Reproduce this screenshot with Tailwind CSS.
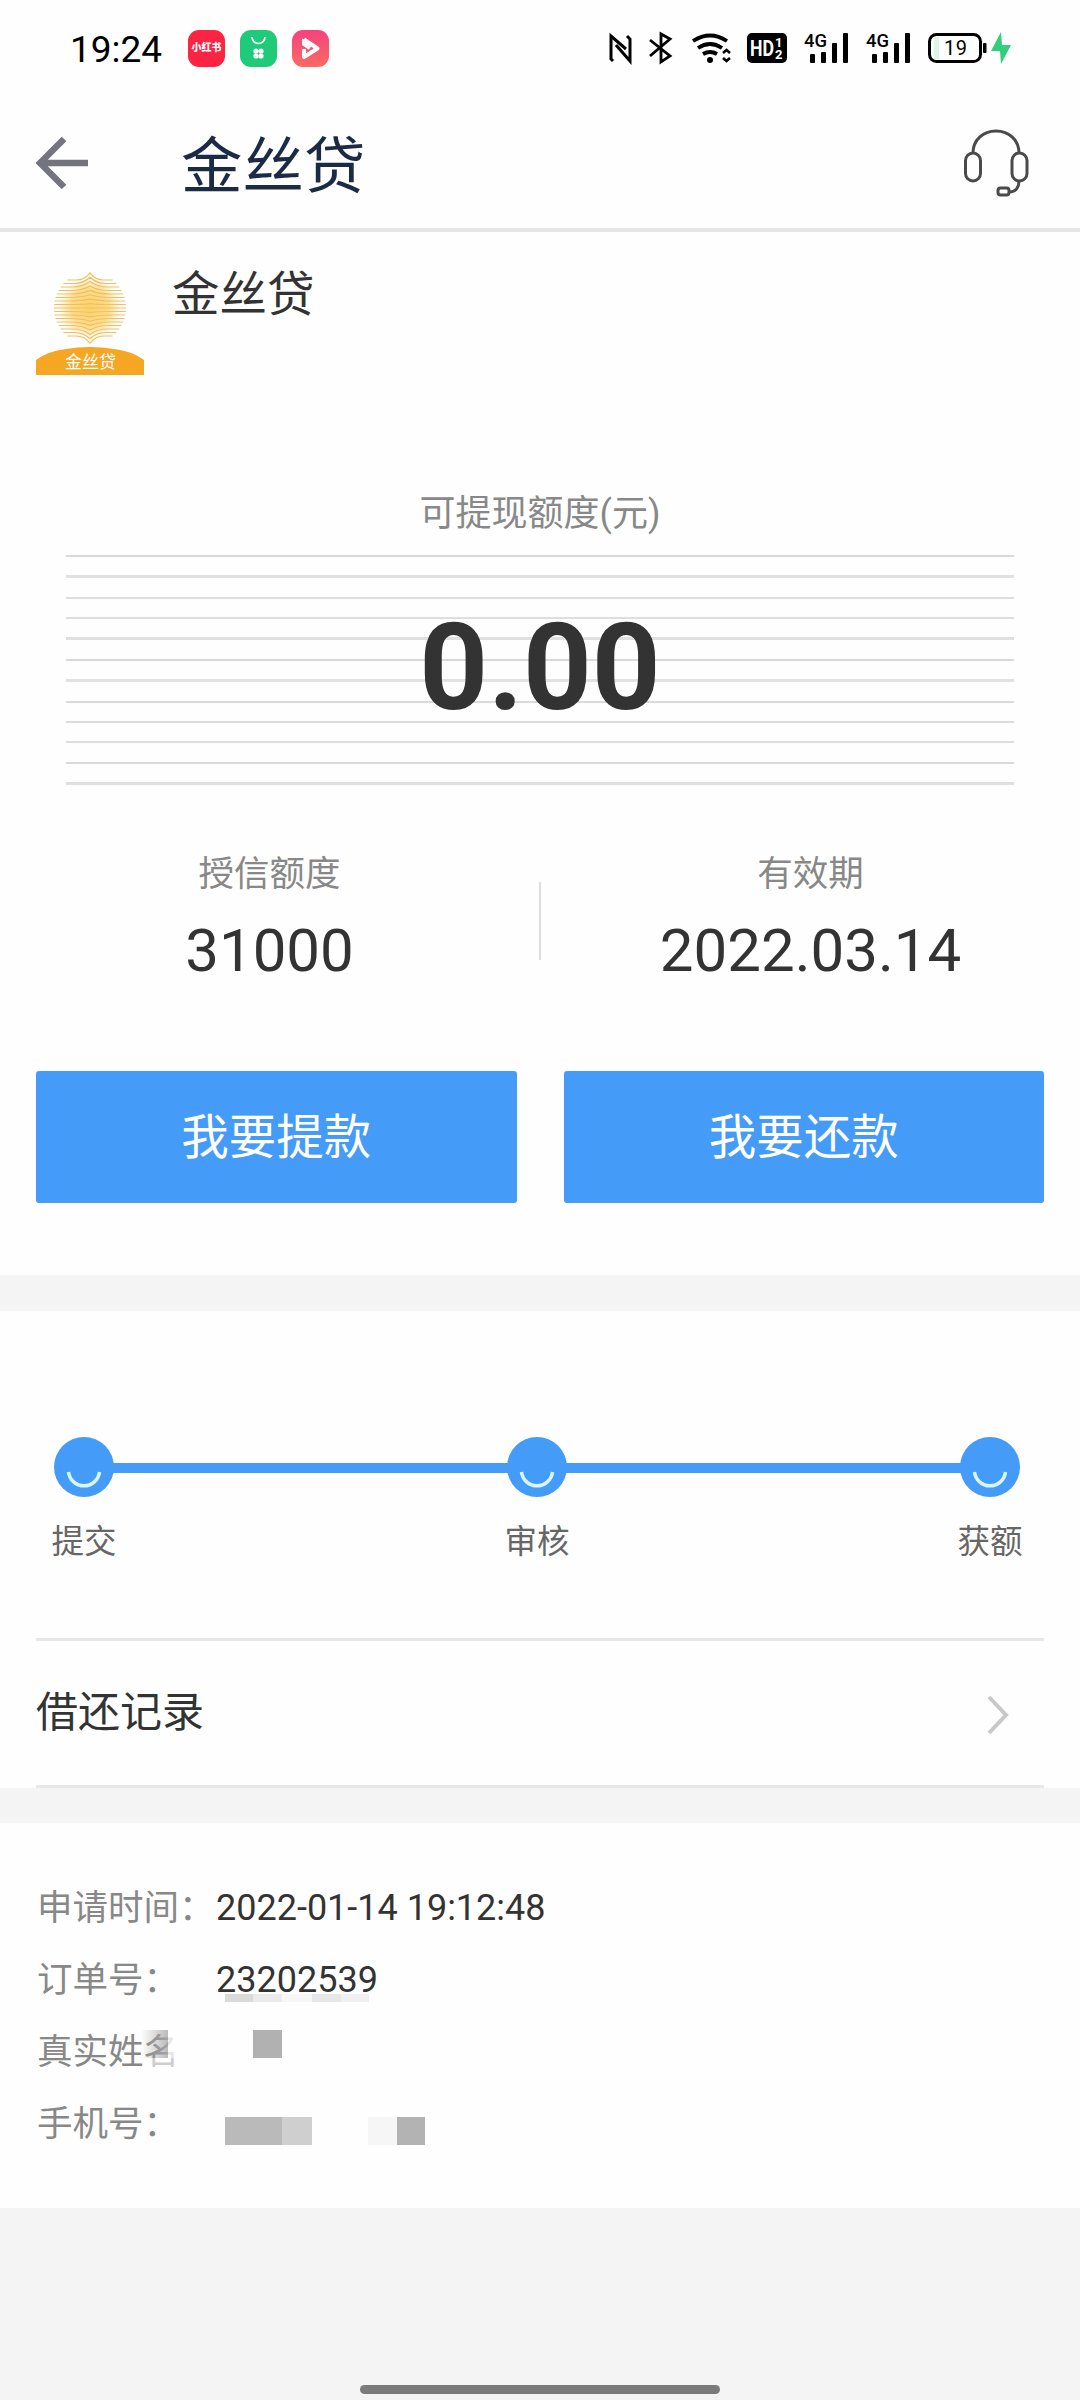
<!DOCTYPE html>
<html lang="zh-CN">
<head>
    <meta charset="UTF-8">
    <meta name="viewport" content="width=device-width, initial-scale=1.0">
    <script src="https://cdn.jsdelivr.net/npm/@tailwindcss/browser@4"></script>
    <title>金丝贷</title>
</head>
<body class="bg-[#f4f4f4]">
<div class="relative w-[1080px] h-[2400px] overflow-hidden flex flex-col bg-[#f4f4f4] text-[#333] font-[Roboto,'Noto_Sans_CJK_SC',sans-serif]">

    <!-- status bar -->
    <div class="h-[96px] shrink-0 bg-[#fefefe] flex items-center pl-[70px] pr-[67px]">
        <span class="text-[37px] leading-none text-black w-[118px] pt-[2px]">19:24</span>
        <div class="flex gap-[15px]">
            <div class="w-[37px] h-[37px] rounded-[11px] bg-[#fb2442] flex items-center justify-center text-white text-[10px] font-black leading-none">小红书</div>
            <svg class="w-[37px] h-[37px]" viewBox="0 0 37 37"><rect width="37" height="37" rx="11" fill="#1fcb79"/><path d="M12 7a6.5 6.5 0 0 0 13 0" fill="none" stroke="#fff" stroke-width="1.6"/><g fill="#fff"><circle cx="16" cy="21" r="2.6"/><circle cx="21" cy="21" r="2.6"/><circle cx="16" cy="26" r="2.6"/><circle cx="21" cy="26" r="2.6"/></g></svg>
            <svg class="w-[37px] h-[37px]" viewBox="0 0 37 37"><defs><linearGradient id="pink" x1="0" y1="0" x2="0" y2="1"><stop offset="0" stop-color="#f5427e"/><stop offset="1" stop-color="#fb6a62"/></linearGradient></defs><rect width="37" height="37" rx="11" fill="url(#pink)"/><path d="M12 9.500L25.500 18.500 12 27V19" fill="none" stroke="#fff" stroke-width="4" stroke-linejoin="round"/><path d="M12 9v5l6 4" fill="none" stroke="#fff" stroke-width="4"/></svg>
        </div>
        <div class="ml-auto flex items-center">
            <svg class="w-[403px] h-[32px] overflow-visible" viewBox="610 32 403 32">
                <!-- nfc -->
                <path d="M614 61l-2-2V36l15 13M617 45l14 16V39l-3-3" transform="translate(-1 0)" fill="none" stroke="#000" stroke-width="3"/>
                <!-- bluetooth -->
                <path d="M650 40l20 16-9 6V34l9 5-20 17" fill="none" stroke="#000" stroke-width="2.8"/>
                <!-- wifi -->
                <g fill="none" stroke="#000" stroke-width="3.8">
                    <path d="M693 41q17-11 34 0"/><path d="M698 48q12-8 24 0"/><path d="M703 54q7-4 14 0"/>
                    <path d="M723 53l3.500-3 3.500 3M723 58l3.500 3 3.500-3" stroke-width="2.600"/>
                </g>
                <circle cx="710" cy="60" r="3"/>
                <!-- hd -->
                <rect x="747" y="33" width="40" height="30" rx="5"/>
                <text x="750" y="55.500" font-size="22" font-weight="700" fill="#fff" textLength="24" lengthAdjust="spacingAndGlyphs">HD</text>
                <text x="775" y="47" font-size="13" font-weight="700" fill="#fff">1</text>
                <text x="775" y="59" font-size="13" font-weight="700" fill="#fff">2</text>
                <!-- signals -->
                <g id="sig">
                    <text x="804" y="47" font-size="19" font-weight="500" textLength="23" lengthAdjust="spacingAndGlyphs">4G</text>
                    <rect x="810" y="54" width="5" height="9" rx="1"/><rect x="821" y="52" width="5" height="11" rx="1"/><rect x="832" y="43" width="5" height="20" rx="1"/><rect x="843" y="33" width="5" height="30" rx="1"/>
                </g>
                <use href="#sig" x="62"/>
                <!-- battery -->
                <rect x="929.500" y="34.500" width="51" height="27" rx="7" fill="#fff" stroke="#000" stroke-width="3"/>
                <path d="M934 37h5v22h-5z" fill="#dcf7ea"/>
                <text x="944" y="54.500" font-size="20" textLength="23">19</text>
                <rect x="983" y="43" width="3.500" height="10" rx="1"/>
                <path d="M1001 32l-10 19h9l1 13 10-19h-9z" fill="#2fd07c"/>
            </svg>
        </div>
    </div>

    <!-- nav bar -->
    <div class="h-[136px] shrink-0 bg-[#fefefe] border-b-4 border-[#e6e6e6] flex items-center pt-[4px] pl-[36px] pr-[50px]">
        <svg class="w-[54px] h-[54px]" viewBox="0 0 54 54" fill="none" stroke="#737480" stroke-width="6.500"><path d="M52 26H4M28 2L4 26l24 24"/></svg>
        <h1 class="ml-[91px] pt-[8px] text-[61.5px] leading-none text-[#1c2b45]">金丝贷</h1>
        <svg class="ml-auto w-[66px] h-[70px]" viewBox="964 130 66 70" fill="none" stroke="#4a4a4a" stroke-width="3">
            <path d="M973 154c0-13 10-22 23-22s23 9 23 22"/>
            <rect x="965.500" y="154" width="15" height="28" rx="7.500"/><rect x="1012" y="154" width="15" height="28" rx="7.500"/>
            <path d="M1019 182c0 6-3 11-10 11"/><rect x="998" y="189" width="11" height="7" rx="2.500"/>
        </svg>
    </div>

    <!-- quota -->
    <div class="h-[1043px] shrink-0 bg-[#fefefe] px-[36px]">
        <div class="h-[255px] flex">
            <svg class="w-[108px] h-[104px] mt-[40px]" viewBox="0 0 108 104">
                <defs><radialGradient id="glow"><stop offset="0" stop-color="#fdd169"/><stop offset="0.6" stop-color="#fddc8c"/><stop offset="1" stop-color="#fddc8c" stop-opacity="0"/></radialGradient></defs>
                <circle cx="54" cy="36" r="31" fill="url(#glow)"/>
                <g id="sun" fill="none" stroke="#efbf60" stroke-width="1.200"></g>
                <path d="M0 88Q12 79 30 77 54 73 78 77 96 79 108 88v15H0z" fill="#f5a623"/>
                <text x="54.500" y="96" font-size="17" fill="#fff" text-anchor="middle">金丝贷</text>
            </svg>
            <h2 class="ml-[28px] mt-[40px] text-[47.5px] leading-none">金丝贷</h2>
        </div>
        <p class="text-center text-[36px] leading-[54px] text-[#888]">可提现额度(元)</p>
        <div class="relative mx-[30px] mt-[14px] h-[230px] flex flex-col justify-between">
            <i class="h-[2px] bg-[#d8d8d8]"></i><i class="h-[3px] bg-[#e0e0e0]"></i><i class="h-[2px] bg-[#dedede]"></i><i class="h-[2px] bg-[#dedede]"></i><i class="h-[3px] bg-[#e0e0e0]"></i><i class="h-[2px] bg-[#dadada]"></i><i class="h-[3px] bg-[#e2e2e2]"></i><i class="h-[2px] bg-[#dadada]"></i><i class="h-[2px] bg-[#dcdcdc]"></i><i class="h-[2px] bg-[#dedede]"></i><i class="h-[2px] bg-[#dadada]"></i><i class="h-[3px] bg-[#dfdfdf]"></i>
            <strong class="absolute inset-x-0 top-0 h-[226px] flex items-center justify-center text-[120px] leading-none font-bold">0.00</strong>
        </div>
        <div class="mt-[62px] h-[150px] flex text-center -mx-[36px]">
            <div class="flex-1">
                <p class="text-[35.5px] leading-[54px] text-[#888]">授信额度</p>
                <p class="mt-[15px] text-[60px] leading-[70px]">31000</p>
            </div>
            <div class="w-[2px] h-[78px] mt-[35px] bg-[#ddd]"></div>
            <div class="flex-1">
                <p class="text-[35.5px] leading-[54px] text-[#888]">有效期</p>
                <p class="mt-[15px] text-[60px] leading-[70px]">2022.03.14</p>
            </div>
        </div>
        <div class="mt-[74px] flex gap-[47px]">
            <button class="flex-1 h-[132px] pt-[3px] rounded-[3px] bg-[#459bf8] text-white text-[47.5px] leading-none">我要提款</button>
            <button class="flex-1 h-[132px] pt-[3px] rounded-[3px] bg-[#459bf8] text-white text-[47.5px] leading-none">我要还款</button>
        </div>
    </div>

    <!-- progress -->
    <div class="mt-[36px] h-[477px] shrink-0 bg-[#fefefe] px-[36px]">
        <div class="relative pt-[126px] px-[14px] pr-[20px] h-[327px] flex justify-between text-center text-[32.5px] text-[#666]">
            <div class="absolute left-[48px] right-[54px] top-[152px] h-[10px] bg-[#459bf8]"></div>
            <div class="relative w-[68px] flex flex-col items-center">
                <svg class="w-[60px] h-[60px]" viewBox="0 0 60 60"><circle cx="30" cy="30" r="30" fill="#459bf8"/><path d="M14.500 35a15.600 15.600 0 0 0 31 0" fill="none" stroke="#d8f4ff" stroke-width="3.500"/></svg>
                <span class="mt-[21px] leading-[48px]">提交</span>
            </div>
            <div class="relative w-[68px] flex flex-col items-center">
                <svg class="w-[60px] h-[60px]" viewBox="0 0 60 60"><circle cx="30" cy="30" r="30" fill="#459bf8"/><path d="M14.500 35a15.600 15.600 0 0 0 31 0" fill="none" stroke="#d8f4ff" stroke-width="3.500"/></svg>
                <span class="mt-[21px] leading-[48px]">审核</span>
            </div>
            <div class="relative w-[68px] flex flex-col items-center">
                <svg class="w-[60px] h-[60px]" viewBox="0 0 60 60"><circle cx="30" cy="30" r="30" fill="#459bf8"/><path d="M14.500 35a15.600 15.600 0 0 0 31 0" fill="none" stroke="#d8f4ff" stroke-width="3.500"/></svg>
                <span class="mt-[21px] leading-[48px]">获额</span>
            </div>
        </div>
        <div class="h-[150px] border-t-[3px] border-b-[3px] border-[#e7e7e7] flex items-center justify-between pr-[34px]">
            <span class="text-[42px] leading-none">借还记录</span>
            <svg class="w-[24px] h-[40px] mt-[3px]" viewBox="0 0 24 40" fill="none" stroke="#c8c8c8" stroke-width="4"><path d="M3 2l17 18L3 38"/></svg>
        </div>
    </div>

    <!-- order details -->
    <div class="mt-[35px] h-[385px] shrink-0 bg-[#fefefe] pl-[37px] pt-[49px] text-[36px] leading-[72px]">
        <div class="flex h-[72px]"><span class="w-[179px] text-[#888] text-[35.5px]">申请时间：</span><span>2022-01-14 19:12:48</span></div>
        <div class="relative flex h-[72px]">
            <span class="w-[179px] text-[#888] text-[35.5px]">订单号：</span><span class="relative z-10">23202539</span>
            <div class="absolute left-[188px] top-[50px] flex h-[8px]"><i class="w-[28px] bg-[#dadada]"></i><i class="w-[29px] bg-[#ebebeb]"></i><i class="w-[30px] bg-[#f7f7f7]"></i><i class="w-[29px] bg-[#e7e7e7]"></i><i class="w-[28px] bg-[#f0f0f0]"></i></div>
        </div>
        <div class="relative h-[72px]">
            <span class="whitespace-nowrap text-[#888] text-[35.5px]">真实姓名</span>
            <i class="absolute left-[104px] top-[14px] w-[27px] h-[28px] bg-linear-to-r from-[#aaa]/0 to-[#aaa]/80"></i>
            <i class="absolute left-[110px] top-[42px] w-[34px] h-[20px] bg-[#fefefe]/60"></i>
            <i class="absolute left-[131px] top-[14px] w-[13px] h-[28px] bg-[#fefefe]/80"></i>
            <i class="absolute left-[216px] top-[14px] w-[29px] h-[28px] bg-[#b1b1b1]"></i>
        </div>
        <div class="relative h-[72px]">
            <span class="text-[#888] text-[35.5px]">手机号：</span>
            <div class="absolute left-[188px] top-[29px] flex h-[28px]"><i class="w-[57px] bg-[#bababa]"></i><i class="w-[30px] bg-[#cfcfcf]"></i><i class="ml-[56px] w-[29px] bg-[#f6f6f6]"></i><i class="w-[28px] bg-[#b3b3b3]"></i></div>
        </div>
    </div>

    <!-- home indicator -->
    <div class="mt-auto mb-[6px] mx-auto w-[360px] h-[9px] shrink-0 rounded-full bg-[#7b7b7b]"></div>
</div>

<script>
    // thin wavy threads that make up the round emblem
    const sun = document.getElementById('sun')
    let threads = ''
    for (let i = -8; i <= 8; i++) {
        const y = 36 + i * 3.5
        const half = Math.sqrt(36 * 36 - (y - 36) * (y - 36))
        const peak = i * 0.9
        threads += `<path d="M${54 - half} ${y}H${54 - half * 0.6}Q${54 - half * 0.25} ${y} 54 ${y + peak}Q${54 + half * 0.25} ${y} ${54 + half * 0.6} ${y}H${54 + half}"/>`
    }
    sun.innerHTML = threads
</script>
</body>
</html>
